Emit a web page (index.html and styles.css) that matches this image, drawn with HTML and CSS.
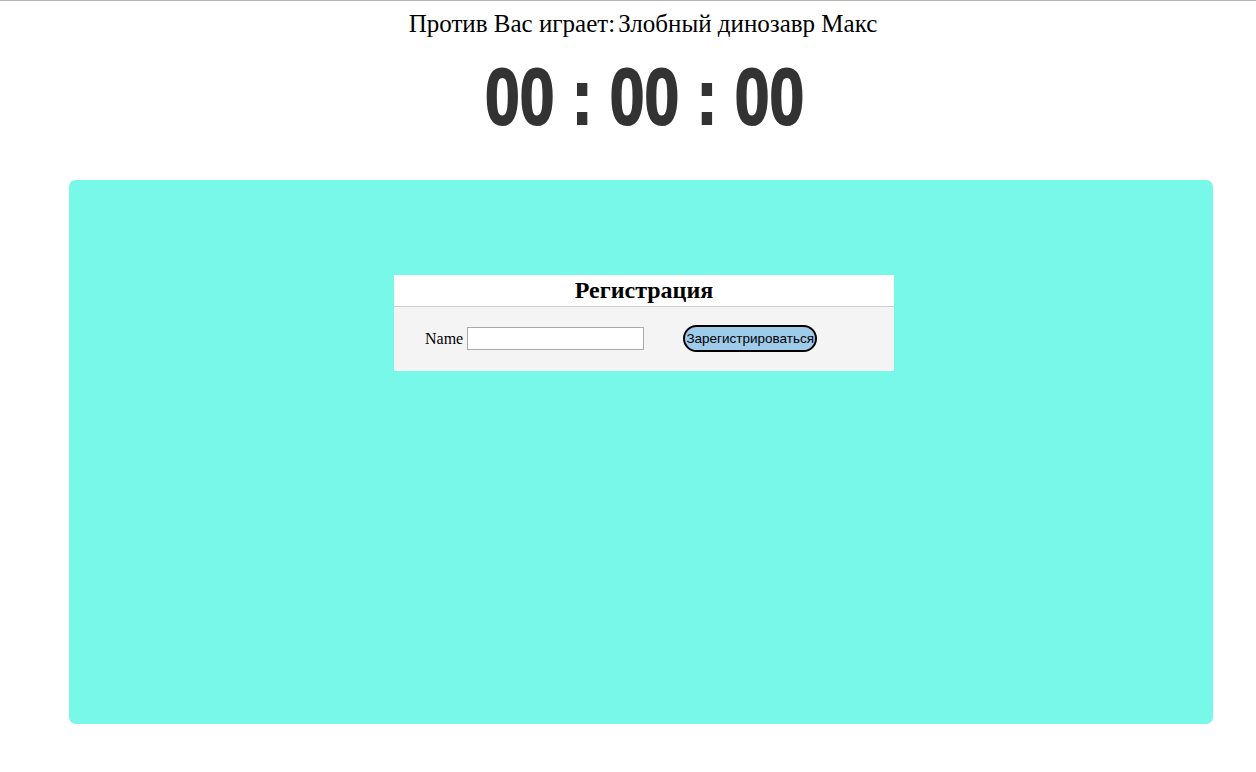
FILE: index.html
```html
<!DOCTYPE html>
<html lang="ru">
<head>
<meta charset="utf-8">
<title>Игра</title>
<link rel="stylesheet" href="styles.css">
</head>
<body>
<div class="topline"></div>
<div class="opponent"><span>Против Вас играет:</span><span>Злобный динозавр Макс</span></div>
<div class="timer-row"><div class="timer">00 : 00 : 00</div></div>
<main class="board">
  <section class="reg">
    <h2 class="reg-title">Регистрация</h2>
    <div class="reg-body">
      <label class="reg-label">Name <input class="reg-input" type="text"></label>
      <button class="reg-btn">Зарегистрироваться</button>
    </div>
  </section>
</main>
</body>
</html>
```
FILE: styles.css
```css
html, body {
  margin: 0;
  padding: 0;
  background: #fff;
}
body {
  font-family: "Liberation Serif", "Times New Roman", serif;
  color: #000;
}
.topline {
  height: 1px;
  background: #b5b5b5;
}
.opponent {
  display: flex;
  justify-content: center;
  gap: 3px;
  font-size: 25px;
  line-height: 28px;
  padding-top: 9px;
  padding-left: 30px;
}
.timer-row {
  display: flex;
  justify-content: center;
  padding-left: 34px;
  margin-top: 14px;
  height: 90px;
}
.timer {
  font-family: "Liberation Sans", Arial, sans-serif;
  font-weight: bold;
  font-size: 80px;
  line-height: 90px;
  color: #333;
  white-space: nowrap;
  transform: scaleX(0.78);
  -webkit-text-stroke: 2px #333;
}
.board {
  margin: 38px 43px 0 69px;
  height: 544px;
  background: #77f8e9;
  border-radius: 7px;
  padding-top: 95px;
  box-sizing: border-box;
}
.reg {
  width: 500px;
  margin-left: 325px;
  background: #f4f4f4;
}
.reg-title {
  margin: 0;
  background: #fff;
  text-align: center;
  font-size: 24px;
  line-height: 31px;
  font-weight: bold;
  border-bottom: 1px solid #cfcfcf;
}
.reg-body {
  display: flex;
  align-items: center;
  gap: 39px;
  padding: 18px 0 19px 31px;
}
.reg-label {
  font-size: 16px;
  display: flex;
  align-items: center;
  gap: 4px;
}
.reg-input {
  width: 177px;
  height: 23px;
  box-sizing: border-box;
  border: 1px solid #a9a9a9;
  margin: 0;
  padding: 1px 2px;
  background: #fff;
}
.reg-btn {
  font-family: "Liberation Sans", Arial, sans-serif;
  font-size: 13.5px;
  height: 27px;
  width: 134px;
  padding: 0;
  background: #9ecbea;
  border: 2px solid #000;
  border-radius: 14px;
  color: #000;
  white-space: nowrap;
}
```
